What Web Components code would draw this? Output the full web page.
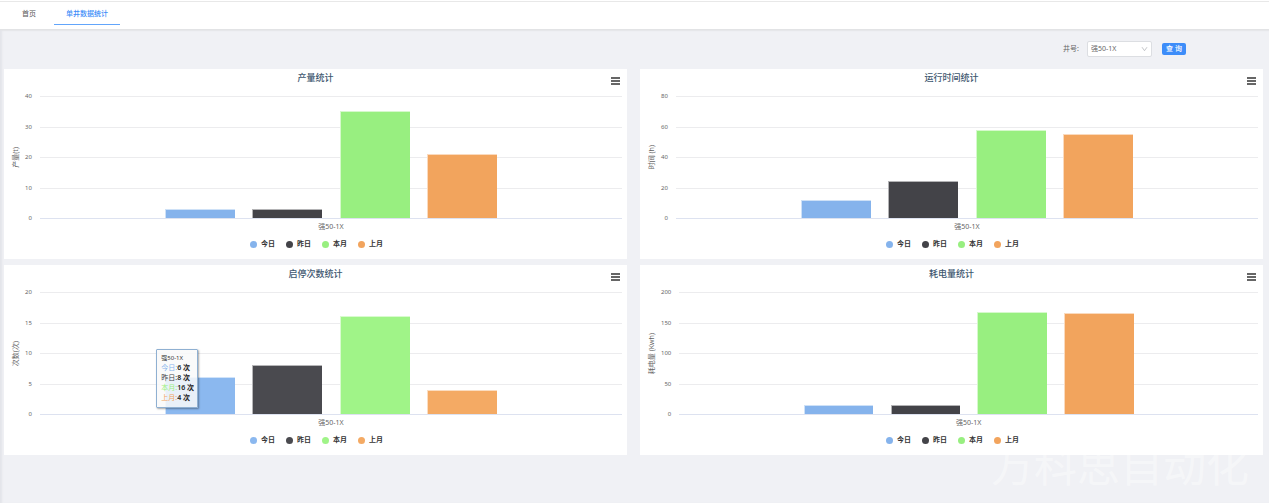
<!DOCTYPE html>
<html lang="zh-CN">
<head>
<meta charset="utf-8">
<title>单井数据统计</title>
<style>
  html, body { margin: 0; min-height: 100%; }
  body {
    background: #f0f1f5;
    color: #666;
    font-family: "Noto Sans", "Noto Sans CJK SC", sans-serif;
    font-size: 7px;
    line-height: 16px;
  }
</style>
</head>
<body>
<well-page>
  <tab-bar slot="tabs"></tab-bar>
  <filter-bar slot="filter"></filter-bar>
  <bar-chart title-text="产量统计" unit="产量(t)" max="40" values="3,3,35,21"></bar-chart>
  <bar-chart title-text="运行时间统计" unit="时间 (h)" max="80" values="12,24,58,55"></bar-chart>
  <bar-chart title-text="启停次数统计" unit="次数(次)" max="20" values="6,8,16,4" active>
    <chart-tooltip slot="tooltip" values="6,8,16,4" unit="次"></chart-tooltip>
  </bar-chart>
  <bar-chart title-text="耗电量统计" unit="耗电量 (Kwh)" max="200" values="14,14,168,165"></bar-chart>
</well-page>

<template id="page-tpl">
  <style>
    :host { display: block; position: relative; min-height: 100vh; box-sizing: border-box; overflow: hidden; }
    main { box-shadow: inset 3px 0 2px -1px #e3e4e9; min-height: calc(100vh - 30px); }
    .charts { display: grid; grid-template-columns: 1fr 1fr; gap: 6px 13px; padding: 0 6px 0 4px; }
    .mark {
      position: absolute; right: 20px; bottom: 14px; pointer-events: none;
      font-family: "Liberation Sans", "Noto Sans CJK SC", sans-serif;
      font-size: 43px; line-height: 43px; color: rgba(255, 255, 255, .4); white-space: nowrap;
    }
  </style>
  <slot name="tabs"></slot>
  <main>
    <slot name="filter"></slot>
    <div class="charts"><slot></slot></div>
  </main>
  <div class="mark">万科思自动化</div>
</template>

<template id="tabs-tpl">
  <style>
    :host { display: block; background: #fff; border-top: 1px solid #fff; border-bottom: 1px solid #e2e3e5; box-shadow: inset 0 1px 0 #e8e8e8, 0 1px 1px #e6e7ea; }
    nav { display: flex; gap: 6px; padding: 3px 10px 4px; }
    a { padding: 0 12px; line-height: 20px; color: #555; text-decoration: none; border-bottom: 1px solid transparent; }
    a[aria-current] { color: #3b8cf8; border-color: #62a5fb; font-weight: 500; }
  </style>
  <nav><a href="#home">首页</a><a href="#well" aria-current="page">单井数据统计</a></nav>
</template>

<template id="filter-tpl">
  <style>
    :host { display: block; }
    form { display: flex; justify-content: flex-end; align-items: center; padding: 11px 83px 12px 0; }
    label { margin-right: 8px; color: #666; }
    .box { position: relative; width: 65px; margin-right: 10px; }
    select {
      display: block; appearance: none; width: 100%; height: 16px; box-sizing: border-box; margin: 0;
      padding: 0 12px 0 3px; border: 1px solid #dcdee2; border-radius: 2px; background: #fff;
      font: inherit; line-height: 14px; color: #666;
    }
    svg { position: absolute; right: 4px; top: 5px; width: 7px; height: 6px; pointer-events: none; }
    button {
      width: 24px; height: 12px; padding: 0; border: 0; border-radius: 2px; background: #3d8df9;
      color: #fff; font: inherit; font-weight: 500; line-height: 12px;
    }
  </style>
  <form>
    <label for="well">井号:</label>
    <div class="box">
      <select id="well"><option>强50-1X</option></select>
      <svg viewBox="0 0 7 6" fill="none" stroke="#b5b7bc" stroke-width=".8"><path d="M1 1.2 3.5 4.7 6 1.2"/></svg>
    </div>
    <button type="button">查 询</button>
  </form>
</template>

<template id="chart-tpl">
  <style>
    :host { display: block; background: #fff; --c0: #85b3ec; --c1: #434348; --c2: #98ef80; --c3: #f2a45d; }
    :host([active]) { --c0: #8bb8ef; --c1: #4a4a4f; --c2: #a0f488; --c3: #f4aa64; }
    header { display: grid; grid-template-columns: 1fr auto 1fr; height: 27px; padding: 0 7px; box-sizing: border-box; }
    h2 { grid-column: 2; margin: 0; font-size: 9px; line-height: 18px; font-weight: 500; color: #3e576f; }
    button { justify-self: end; margin: 7px 0 0; padding: 0; border: 0; background: none; width: 9px; height: 9px; }
    button svg { display: block; }
    .body { display: grid; grid-template-columns: 10px auto 1fr; padding: 0 5px 0 7px; }
    .unit { display: flex; align-items: center; justify-content: center; }
    .unit span { writing-mode: vertical-rl; text-orientation: sideways; transform: rotate(180deg); line-height: 10px; white-space: nowrap; }
    .ticks { display: flex; flex-direction: column; justify-content: space-between; margin: -4px 8px -4px 4px; text-align: right; font-size: 6px; line-height: 9px; }
    .plot { display: grid; position: relative; height: 123px; }
    .lines, .bars { grid-area: 1 / 1; min-height: 0; }
    .lines { display: flex; flex-direction: column; justify-content: space-between; }
    .lines i { height: 1px; background: #ececee; }
    .lines i:last-child { background: #dde2f0; }
    .bars { display: grid; grid-template-columns: repeat(4, 1fr); align-items: end; justify-items: center; padding: 0 20% 1px; height: 122px; }
    .bars b { width: 80%; box-sizing: border-box; border: 0 solid rgba(255, 255, 255, .6); border-width: 1px 0 0 1px; }
    .name { grid-column: 3; text-align: center; line-height: 16px; }
    ul { display: flex; justify-content: center; gap: 11px; margin: 0; padding: 0 0 6px 2px; list-style: none; line-height: 18px; font-weight: 700; color: #333; }
    li { display: flex; align-items: center; gap: 4px; }
    li i { width: 7px; height: 7px; border-radius: 50%; }
  </style>
  <header>
    <h2></h2>
    <button type="button" aria-label="导出菜单"><svg width="9" height="9" viewBox="0 0 9 9" fill="#666"><path d="M0 1h9v2H0zM0 4h9v2H0zM0 7h9v2H0z"/></svg></button>
  </header>
  <div class="body">
    <div class="unit"><span></span></div>
    <div class="ticks"></div>
    <div class="plot">
      <div class="lines"></div>
      <div class="bars"></div>
      <slot name="tooltip"></slot>
    </div>
    <div class="name">强50-1X</div>
  </div>
  <ul></ul>
</template>

<template id="tooltip-tpl">
  <style>
    :host {
      position: absolute; left: 20%; bottom: 7px; width: 42px; box-sizing: border-box; padding: 3px 3px 4px 4px;
      border: 1px solid #8fb0d2; border-radius: 1px; background: rgba(249, 249, 249, .85);
      box-shadow: 1px 1px 2px rgba(0, 0, 0, .35); color: #333; white-space: nowrap;
    }
    p { margin: 0; font-size: 6px; line-height: 10px; }
    table { border-collapse: collapse; line-height: 10px; }
    th, td { padding: 0; text-align: left; font-weight: 400; }
    td { font-weight: 600; color: #222; }
  </style>
  <p>强50-1X</p>
  <table></table>
</template>

<script>
  const SERIES = ['今日', '昨日', '本月', '上月'];
  const COLORS = ['#85b3ec', '#434348', '#98ef80', '#f2a45d'];

  class TemplateElement extends HTMLElement {
    constructor() {
      super();
      this.attachShadow({ mode: 'open' })
        .append(document.getElementById(this.constructor.template).content.cloneNode(true));
    }
    part$(selector) { return this.shadowRoot.querySelector(selector); }
    get values() { return this.getAttribute('values').split(',').map(Number); }
  }

  class WellPage extends TemplateElement { static template = 'page-tpl'; }
  class TabBar extends TemplateElement { static template = 'tabs-tpl'; }
  class FilterBar extends TemplateElement { static template = 'filter-tpl'; }

  class BarChart extends TemplateElement {
    static template = 'chart-tpl';
    connectedCallback() {
      const max = Number(this.getAttribute('max'));
      const steps = [4, 3, 2, 1, 0];
      this.part$('h2').textContent = this.getAttribute('title-text');
      this.part$('.unit span').textContent = this.getAttribute('unit');
      this.part$('.ticks').innerHTML = steps.map(s => `<span>${max * s / 4}</span>`).join('');
      this.part$('.lines').innerHTML = steps.map(() => '<i></i>').join('');
      this.part$('.bars').innerHTML = this.values
        .map((v, i) => `<b style="height:${v / max * 100}%;background-color:var(--c${i})"></b>`).join('');
      this.part$('ul').innerHTML = SERIES
        .map((name, i) => `<li><i style="background:var(--c${i})"></i>${name}</li>`).join('');
    }
  }

  class ChartTooltip extends TemplateElement {
    static template = 'tooltip-tpl';
    connectedCallback() {
      const unit = this.getAttribute('unit');
      this.part$('table').innerHTML = this.values
        .map((v, i) => `<tr><th scope="row" style="color:${COLORS[i]}">${SERIES[i]}:</th><td>${v} ${unit}</td></tr>`).join('');
    }
  }

  customElements.define('well-page', WellPage);
  customElements.define('tab-bar', TabBar);
  customElements.define('filter-bar', FilterBar);
  customElements.define('bar-chart', BarChart);
  customElements.define('chart-tooltip', ChartTooltip);
</script>
</body>
</html>
